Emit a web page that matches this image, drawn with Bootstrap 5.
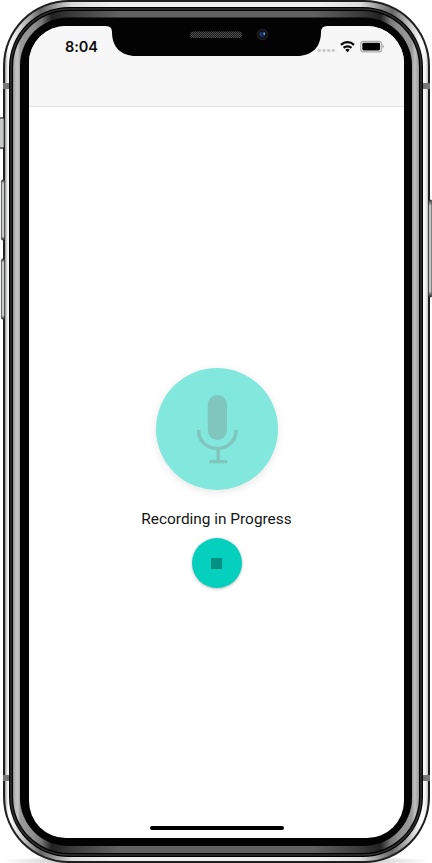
<!DOCTYPE html>
<html lang="en">
<head>
<meta charset="utf-8">
<meta name="viewport" content="width=device-width, initial-scale=1">
<title>Recorder</title>
<link href="https://cdn.jsdelivr.net/npm/bootstrap@5.3.0/dist/css/bootstrap.min.css" rel="stylesheet">
<style>
body{background:#fff;font-family:"Inter",sans-serif;color:#111}
.phone{width:432px;height:863px;padding:26px 28px 25px 29px}
.shell{left:0;top:0;width:432px;height:863px;z-index:0}
.screen{z-index:1;border-radius:37px;background:#fff}
.topbar{height:81px;background:#f7f7f7;border-bottom:1px solid #e3e3e3}
.status{height:42px;padding:0 19px 0 36px}
.clock{font-size:14.5px;font-weight:600;letter-spacing:-.1px;line-height:42px;color:#0b0b0b}
.notch{left:0;top:0;z-index:2}
.stage{padding-top:261px}
.mic-disc{width:122px;height:122px;margin-top:.4px;background:#82e8de;box-shadow:0 2px 8px rgba(0,0,0,.1)}
.caption{font-family:"Roboto",sans-serif;font-size:15.4px;line-height:20px;margin:19px 0 9px;color:#151515}
.stop-btn{width:50px;height:50px;background:#05cfbd;box-shadow:0 1px 3px rgba(0,0,0,.28)}
.stop-icon{width:11px;height:11px;background:#039083}
.home-bar{width:134px;height:4px;background:#000;margin-bottom:8px}
</style>
<script src="https://cdn.jsdelivr.net/npm/bootstrap@5.3.0/dist/js/bootstrap.bundle.min.js"></script>
</head>
<body class="overflow-hidden">
<div class="phone position-relative overflow-hidden">
  <!-- metal body, side buttons and bezel -->
  <svg class="shell position-absolute" viewBox="0 0 432 863" aria-hidden="true">
    <defs>
      <linearGradient id="steel" x1="5" x2="428" y1="0" y2="0" gradientUnits="userSpaceOnUse">
        <stop offset="0" stop-color="#999"/><stop offset=".006" stop-color="#eee"/><stop offset=".01" stop-color="#fff"/><stop offset=".04" stop-color="#ccc"/><stop offset=".085" stop-color="#666"/><stop offset=".16" stop-color="#ddd"/><stop offset=".25" stop-color="#eee"/><stop offset=".75" stop-color="#eee"/><stop offset=".84" stop-color="#ddd"/><stop offset=".915" stop-color="#666"/><stop offset=".96" stop-color="#ccc"/><stop offset=".985" stop-color="#fff"/><stop offset=".995" stop-color="#eee"/><stop offset="1" stop-color="#bbb"/>
      </linearGradient>
      <linearGradient id="inner" x1="13" x2="419" y1="0" y2="0" gradientUnits="userSpaceOnUse">
        <stop offset="0" stop-color="#8c8c8c"/><stop offset=".005" stop-color="#b8b8b8"/><stop offset=".012" stop-color="#c4c4c4"/><stop offset=".018" stop-color="#999"/><stop offset=".05" stop-color="#909090"/><stop offset=".07" stop-color="#777"/><stop offset=".095" stop-color="#222"/><stop offset=".14" stop-color="#383838"/><stop offset=".26" stop-color="#626262"/><stop offset=".74" stop-color="#626262"/><stop offset=".86" stop-color="#383838"/><stop offset=".905" stop-color="#222"/><stop offset=".93" stop-color="#777"/><stop offset=".95" stop-color="#909090"/><stop offset=".982" stop-color="#999"/><stop offset=".99" stop-color="#c0c0c0"/><stop offset="1" stop-color="#999"/>
      </linearGradient>
      <linearGradient id="key" x1="0" x2="0" y1="0" y2="1"><stop offset="0" stop-color="#333"/><stop offset=".06" stop-color="#c8caca"/><stop offset=".94" stop-color="#c8caca"/><stop offset="1" stop-color="#222"/></linearGradient>
      <radialGradient id="ground"><stop offset="0" stop-color="#000" stop-opacity=".6"/><stop offset=".6" stop-color="#000" stop-opacity=".28"/><stop offset="1" stop-color="#000" stop-opacity="0"/></radialGradient>
    </defs>
    <ellipse cx="216" cy="861" rx="214" ry="7" fill="url(#ground)"/>
    <rect x="3" y="0" width="427" height="863" rx="66" fill="#1f1f1f"/>
    <rect x="5" y="2" width="423" height="859" rx="64" fill="url(#steel)"/>
    <g fill="url(#key)" stroke="#3c3c3c" stroke-width=".8">
      <rect x="-.5" y="117.500" width="4.500" height="31" rx="2"/>
      <rect x="1.400" y="180" width="3.200" height="60" rx="1.200"/>
      <rect x="1.400" y="259" width="3.200" height="60" rx="1.200"/>
      <rect x="428.600" y="200" width="3.200" height="97" rx="1.200"/>
    </g>
    <path d="M3 83h7v6H3zM422 83h8v6h-8zM3 775h7v6H3zM422 775h8v6h-8z" fill="#777"/>
    <rect x="9" y="7" width="414" height="850" rx="60" fill="#000"/>
    <rect x="11" y="9" width="410" height="846" rx="58" fill="none" stroke="#303030" stroke-width="1.600"/>
    <rect x="13" y="11" width="406" height="842" rx="56" fill="url(#inner)"/>
    <rect x="20" y="17.500" width="392" height="828.500" rx="48" fill="#030303"/>
  </svg>

  <div class="screen position-relative overflow-hidden h-100 d-flex flex-column">
    <header class="topbar flex-shrink-0">
      <div class="status d-flex align-items-center justify-content-between">
        <span class="clock">8:04</span>
        <svg width="70" height="16" viewBox="315 39 70 16" role="img" aria-label="Signal, Wi-Fi and battery">
          <g fill="#c8c8c8"><circle cx="319.400" cy="50.400" r="1.600"/><circle cx="324" cy="50.400" r="1.600"/><circle cx="328.600" cy="50.400" r="1.600"/><circle cx="333.200" cy="50.400" r="1.600"/></g>
          <g fill="none" stroke="#050505" stroke-width="2.200"><path d="M341 44.900a9.200 9.200 0 0 1 13 0"/><path d="M343.600 47.900a5.500 5.500 0 0 1 7.800 0"/></g>
          <path d="M345.300 49.800a3.200 3.200 0 0 1 4.400 0l-2.200 2.400z" fill="#050505"/>
          <rect x="360.700" y="41.300" width="21" height="10.600" rx="3" fill="none" stroke="#ababab" stroke-width="1.200"/>
          <rect x="362.300" y="42.800" width="17.800" height="7.600" rx="1.400" fill="#000"/>
          <path d="M382.700 44.800c1.500.6 1.500 2.900 0 3.500z" fill="#999"/>
        </svg>
      </div>
    </header>
    <svg class="notch position-absolute" width="375" height="32" viewBox="29 26 375 32" aria-hidden="true">
      <defs><pattern id="mesh" width="2" height="2" patternUnits="userSpaceOnUse"><path d="M0 0h1v1H0zM1 1h1v1H1z" fill="#4c4c4c"/></pattern></defs>
      <path d="M106 26q6 0 6 6C112 47 121 56 136 56H297C312 56 321 47 321 32q0-6 6-6z" fill="#030303"/>
      <rect x="190" y="31.500" width="52" height="6.500" rx="3.200" fill="#1c1c1c"/>
      <rect x="190" y="31.500" width="52" height="6.500" rx="3.200" fill="url(#mesh)"/>
      <circle cx="262.500" cy="34.500" r="5" fill="#0c0d10" stroke="#1f1f1f" stroke-width="1.400"/>
      <circle cx="262.300" cy="34.500" r="3" fill="#142748"/>
      <path d="M260 32.500h1.500v3H260z" fill="#234788"/><path d="M263.500 32.500h1.500v2.500h-1.500z" fill="#5f9ce8"/>
    </svg>

    <main class="stage flex-grow-1 d-flex flex-column align-items-center">
      <div class="mic-disc rounded-circle d-flex flex-shrink-0">
        <svg width="122" height="122" viewBox="156 368 122 122" role="img" aria-label="Microphone">
          <rect x="207.800" y="395" width="19.200" height="45" rx="9.600" fill="#81c5bf"/>
          <g fill="none" stroke="#81c5bf" stroke-width="3.600"><path d="M198.700 430v1.500a18.600 17 0 0 0 37.200 0V430"/><path d="M218.300 448v13"/><path d="M210.600 461.700h15.400" stroke-linecap="round" stroke-width="3.200"/></g>
        </svg>
      </div>
      <p class="caption text-nowrap">Recording in Progress</p>
      <button type="button" aria-label="Stop recording" class="stop-btn btn rounded-circle border-0 p-0 d-flex align-items-center justify-content-center"><span class="stop-icon"></span></button>
      <div class="home-bar rounded-pill mt-auto"></div>
    </main>
  </div>
</div>
</body>
</html>
